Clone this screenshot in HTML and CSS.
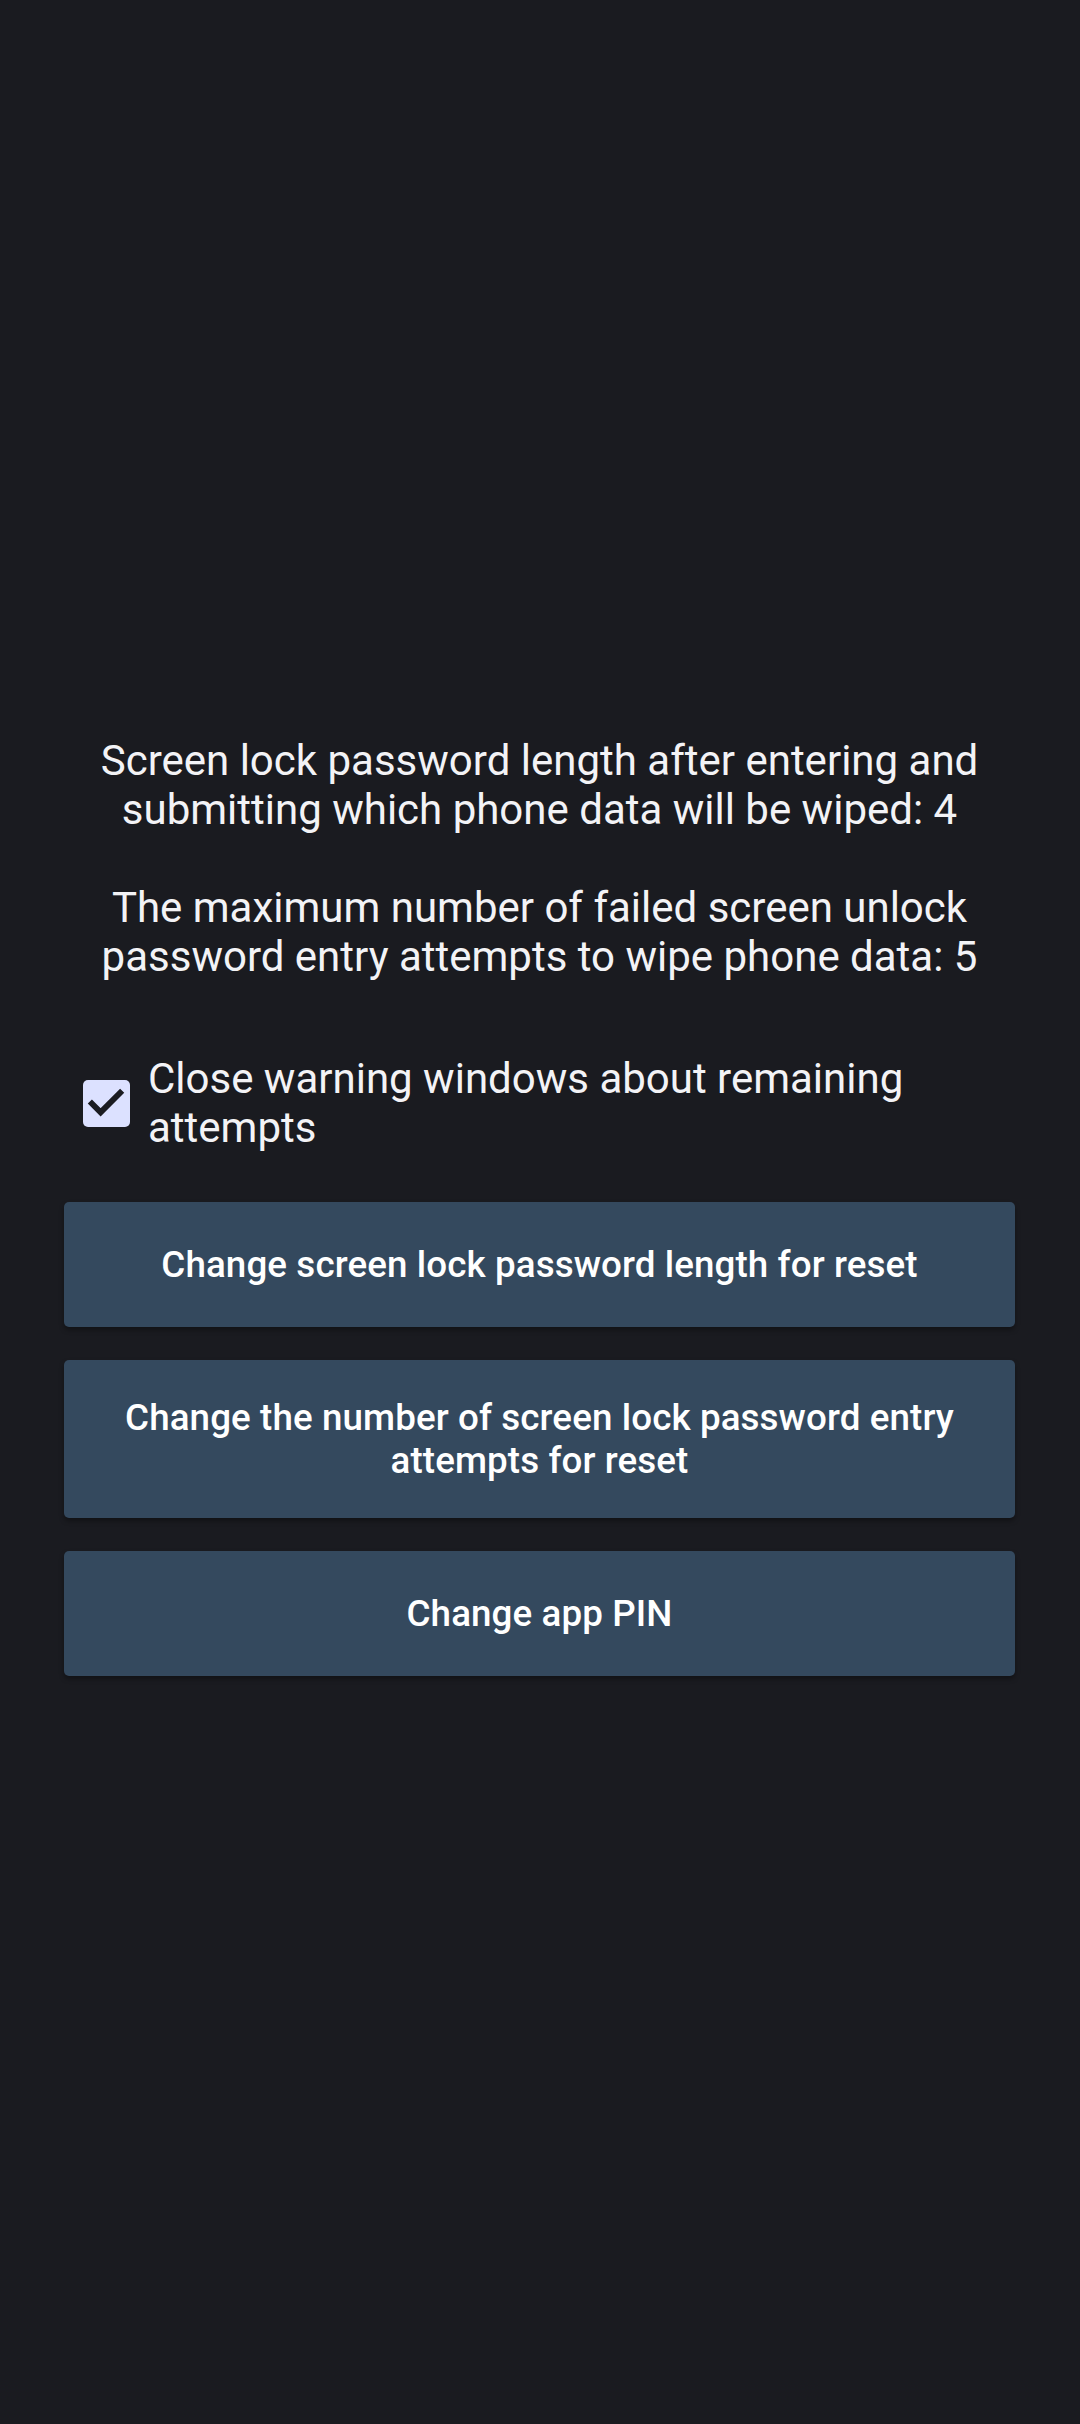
FILE: index.html
```html
<!DOCTYPE html>
<html lang="en">
<head>
<meta charset="utf-8">
<title>Settings</title>
<link rel="stylesheet" href="styles.css">
</head>
<body>
<main class="screen">
  <section class="content">
    <p class="status">Screen lock password length after entering and submitting which phone data will be wiped: 4<br><br>The maximum number of failed screen unlock password entry attempts to wipe phone data: 5</p>
    <label class="check-row">
      <span class="checkbox">
        <svg viewBox="0 0 48 48" width="47" height="47" aria-hidden="true">
          <path d="M7 22 L18 33 L40 11" fill="none" stroke="#1b1c21" stroke-width="6"/>
        </svg>
      </span>
      <span class="check-label">Close warning windows about remaining attempts</span>
    </label>
    <div class="actions">
      <button class="btn">Change screen lock password length for reset</button>
      <button class="btn">Change the number of screen lock password entry attempts for reset</button>
      <button class="btn">Change app PIN</button>
    </div>
  </section>
</main>
</body>
</html>
```

FILE: styles.css
```css
html, body {
  margin: 0;
  padding: 0;
  background: #1a1b20;
}
.screen {
  width: 1080px;
  min-height: 2424px;
  box-sizing: border-box;
  padding-top: 736px;
  font-family: Roboto, "Noto Sans", sans-serif;
  color: #f3f3f6;
}
.content {
  padding: 0 65px 0 64px;
  display: flex;
  flex-direction: column;
}
.status {
  margin: 0;
  text-align: center;
  font-size: 42px;
  line-height: 49px;
}
.check-row {
  margin-top: 73px;
  display: flex;
  align-items: center;
  padding-left: 19px;
  gap: 18px;
}
.checkbox {
  flex: none;
  width: 47px;
  height: 47px;
  border-radius: 5px;
  background: #dce1ff;
  display: flex;
}
.check-label {
  font-size: 42px;
  line-height: 49px;
}
.actions {
  margin-top: 50px;
  display: flex;
  flex-direction: column;
  gap: 33px;
}
.btn {
  min-height: 125px;
  border: none;
  border-radius: 5px;
  background: #34495e;
  color: #ffffff;
  font-family: Roboto, "Noto Sans", sans-serif;
  font-weight: 500;
  font-size: 36.75px;
  line-height: 43px;
  letter-spacing: 0.1px;
  padding: 36px 60px;
  text-align: center;
  box-shadow: 0 3px 5px rgba(0, 0, 0, 0.35);
}
```
